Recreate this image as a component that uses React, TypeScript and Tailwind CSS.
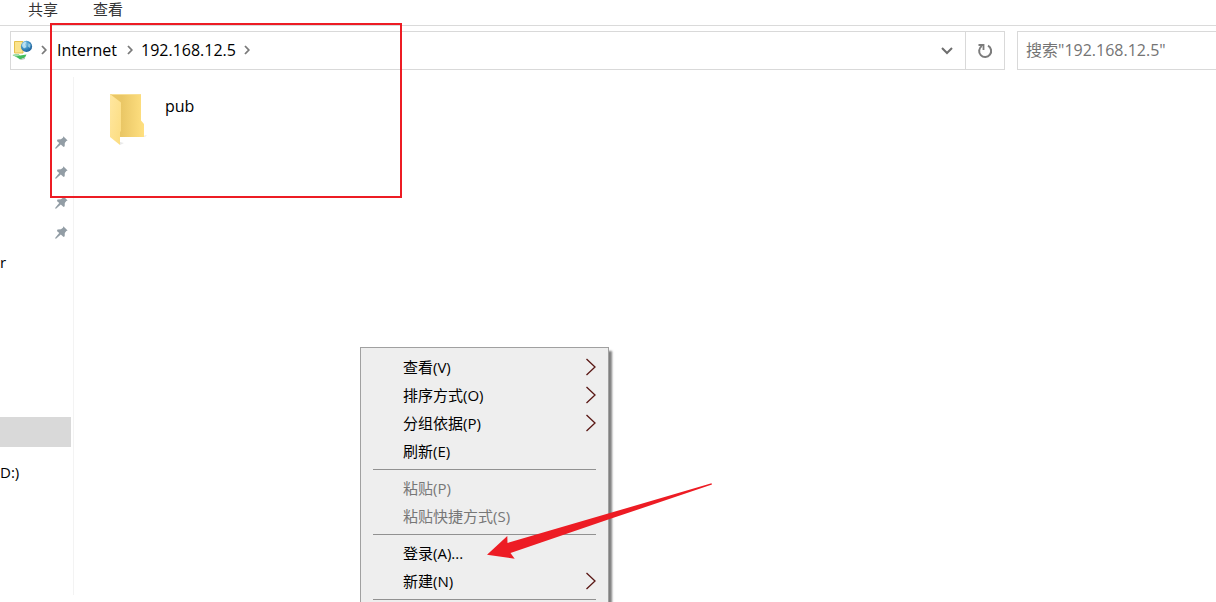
import React from "react";

const cjkFont = "font-['Open_Sans','Noto_Sans_CJK_SC',sans-serif]";

function Crumb() {
  return (
    <svg width="6" height="10" viewBox="0 0 6 10" fill="none" stroke="#7a7a7a" strokeWidth="1.8" className="shrink-0" aria-hidden="true">
      <path d="M1 1 L4.8 5 L1 9" />
    </svg>
  );
}

function NetworkIcon() {
  return (
    <svg width="22" height="22" viewBox="0 0 22 22" className="shrink-0" aria-hidden="true">
      <defs>
        <radialGradient id="globe" cx="35%" cy="30%" r="75%">
          <stop offset="0" stopColor="#9fd6ee" />
          <stop offset="0.5" stopColor="#3f93c6" />
          <stop offset="1" stopColor="#1d5c96" />
        </radialGradient>
      </defs>
      <path d="M3.5 2.5 H12 V14 H3.5 Z" fill="#fbe38c" stroke="#e5c14c" />
      <circle cx="15.5" cy="7.4" r="5.6" fill="url(#globe)" />
      <path d="M11.500 4.500 Q14 2 15.500 3 L14 5.500 L15.500 8 L13 9.500 L11 7 Z" fill="#c9e9f5" opacity="0.8" />
      <path d="M17.500 4 L19.500 5.500 L19 9 L17 7.500 Z" fill="#a6d5e6" opacity="0.8" />
      <path d="M1.500 16 L7 15 L9 16.500 L15.500 15.500 L14 18.500 L9 20.500 L7 19 Z" fill="#43bd5b" />
      <path d="M1.500 16 L7 15 L9 16.500 L5 17.500 Z" fill="#a6dfae" />
      <path d="M9 20.500 L14 18.500 V20 L10 21 Z" fill="#b9c1bc" />
    </svg>
  );
}

function Pin() {
  return (
    <svg width="13" height="13" viewBox="0 0 13 13" fill="#929da5" aria-hidden="true">
      <path d="M8.3 0.3 L12.6 4.6 L11.3 5 L9.800 7 L9.700 10.2 L8.600 11 L5.8 8.600 L1 12.7 L0.2 12.5 L0.3 11.7 L4.2 7 L1.900 4.9 L2.500 3.5 L5.9 3.3 L8 1.7 Z" />
    </svg>
  );
}

function FolderIcon() {
  return (
    <svg width="38" height="53" viewBox="0 0 38 53" className="shrink-0" aria-hidden="true">
      <defs>
        <linearGradient id="back" x1="0" x2="1">
          <stop offset="0" stopColor="#eac766" />
          <stop offset="0.35" stopColor="#eac766" />
          <stop offset="1" stopColor="#ffe081" />
        </linearGradient>
        <linearGradient id="flap" x1="0" x2="1" y1="0" y2="1">
          <stop offset="0" stopColor="#ffe7a0" />
          <stop offset="1" stopColor="#fbdc80" />
        </linearGradient>
      </defs>
      <path d="M34 43 L38 42 L36 44 Z M11 49 L15 50 L11 52 Z" fill="#e9e9e9" />
      <path d="M1 1 H32 V27.500 L35 31 V44 H10 Z" fill="url(#back)" />
      <path d="M1 1 H32 V2 H3 Z" fill="#f8df94" />
      <path d="M1 1 L12 9.500 V38 L11 39 V52 L1 44 Z" fill="url(#flap)" />
    </svg>
  );
}

function MenuItem({ label, submenu, disabled }: { label: string; submenu?: boolean; disabled?: boolean }) {
  return (
    <button
      type="button"
      role="menuitem"
      disabled={disabled}
      className="flex h-7 w-full items-center justify-between pr-3 pl-[42px] text-left text-[15px] leading-7 text-black disabled:text-[#777777]"
    >
      <span>{label}</span>
      {submenu && (
        <svg width="11" height="18" viewBox="0 0 11 18" fill="none" stroke="#5a1815" strokeWidth="1.3" aria-hidden="true">
          <path d="M1.500 1 L10 9 L1.500 17" />
        </svg>
      )}
    </button>
  );
}

function Separator() {
  return <div role="separator" className="mx-3 my-1 h-px bg-[#919191]" />;
}

export default function App() {
  return (
    <div className={`relative flex h-screen flex-col overflow-hidden bg-white text-black ${cjkFont}`}>
      <nav className="flex h-[26px] shrink-0 gap-[35px] border-b border-[#dadada] pl-7 text-[15px] leading-[18px] text-[#333333]">
        <button type="button" className="h-[18px]">共享</button>
        <button type="button" className="h-[18px]">查看</button>
      </nav>

      <header className="mt-[5px] flex h-[39px] shrink-0 pl-2.5">
        <div className="flex flex-1 border border-[#d9d9d9]">
          <div className="flex flex-1 items-center pb-0.5 text-base">
            <NetworkIcon />
            <span className="w-2" />
            <Crumb />
            <a href="#internet" className="mx-2.5">Internet</a>
            <Crumb />
            <a href="#host" className="mx-2">192.168.12.5</a>
            <Crumb />
          </div>
          <button type="button" aria-label="展开" className="flex w-9 items-center justify-center">
            <svg width="12" height="8" viewBox="0 0 12 8" fill="none" stroke="#6e6e6e" strokeWidth="2" aria-hidden="true">
              <path d="M1 1 L6 6 L11 1" />
            </svg>
          </button>
          <button type="button" aria-label="刷新" className="flex w-[39px] items-center justify-center border-l border-[#d9d9d9]">
            <svg width="16" height="16" viewBox="0 0 16 16" fill="none" stroke="#7c7c7c" strokeWidth="2" aria-hidden="true">
              <path d="M11 2.700 A6 6 0 1 1 4.800 3" />
              <path d="M1.500 2 H6.500 V7" strokeWidth="1.800" />
            </svg>
          </button>
        </div>
        <input
          type="search"
          aria-label="搜索"
          placeholder={'搜索"192.168.12.5"'}
          className="ml-3 w-[199px] border border-r-0 border-[#d9d9d9] bg-white pb-0.5 pl-2 text-base outline-none placeholder:text-[#747474] placeholder:opacity-100"
        />
      </header>

      <div className="mt-[7px] mb-[7px] flex min-h-0 flex-1">
        <aside className="w-[74px] shrink-0 overflow-hidden border-r border-[#f3f3f3] pt-[50px] text-[15px] leading-[30px]">
          <ul>
            {[0, 1, 2, 3].map((n) => (
              <li key={n} className="flex h-[30px] items-center justify-end pr-[5px]"><Pin /></li>
            ))}
            <li className="mb-[140px] h-[30px]">r</li>
            <li className="mr-[2px] mb-[10px] h-[30px] bg-[#d9d9d9]" />
            <li className="h-[30px]">D:)</li>
          </ul>
        </aside>
        <main className="flex-1 pt-4 pl-[35px]">
          <a href="#pub" className="inline-flex gap-[18px]">
            <FolderIcon />
            <span className="text-base leading-[26px]">pub</span>
          </a>
        </main>
      </div>

      <div className="absolute top-[23px] left-[50px] h-[175px] w-[352px] border-2 border-[#ed1c24]" />

      <div
        role="menu"
        className="absolute top-[347px] bottom-0 left-[360px] w-[249px] border border-b-0 border-[#a0a0a0] bg-[#eeeeee] pt-[5px] shadow-[3px_4px_2px_#00000080]"
      >
        <MenuItem label="查看(V)" submenu />
        <MenuItem label="排序方式(O)" submenu />
        <MenuItem label="分组依据(P)" submenu />
        <MenuItem label="刷新(E)" />
        <Separator />
        <MenuItem label="粘贴(P)" disabled />
        <MenuItem label="粘贴快捷方式(S)" disabled />
        <Separator />
        <MenuItem label="登录(A)..." />
        <MenuItem label="新建(N)" submenu />
        <Separator />
      </div>

      <svg width="226" height="78" viewBox="0 0 226 78" className="absolute top-[482px] left-[487px]" aria-hidden="true">
        <path d="M0 72.700 L20.300 54 L20.500 61 L122 31.300 L224.500 1.200 L225 2.600 L122 37.300 L23.500 71 L27.700 76.700 Z" fill="#ed1c24" />
      </svg>
    </div>
  );
}
